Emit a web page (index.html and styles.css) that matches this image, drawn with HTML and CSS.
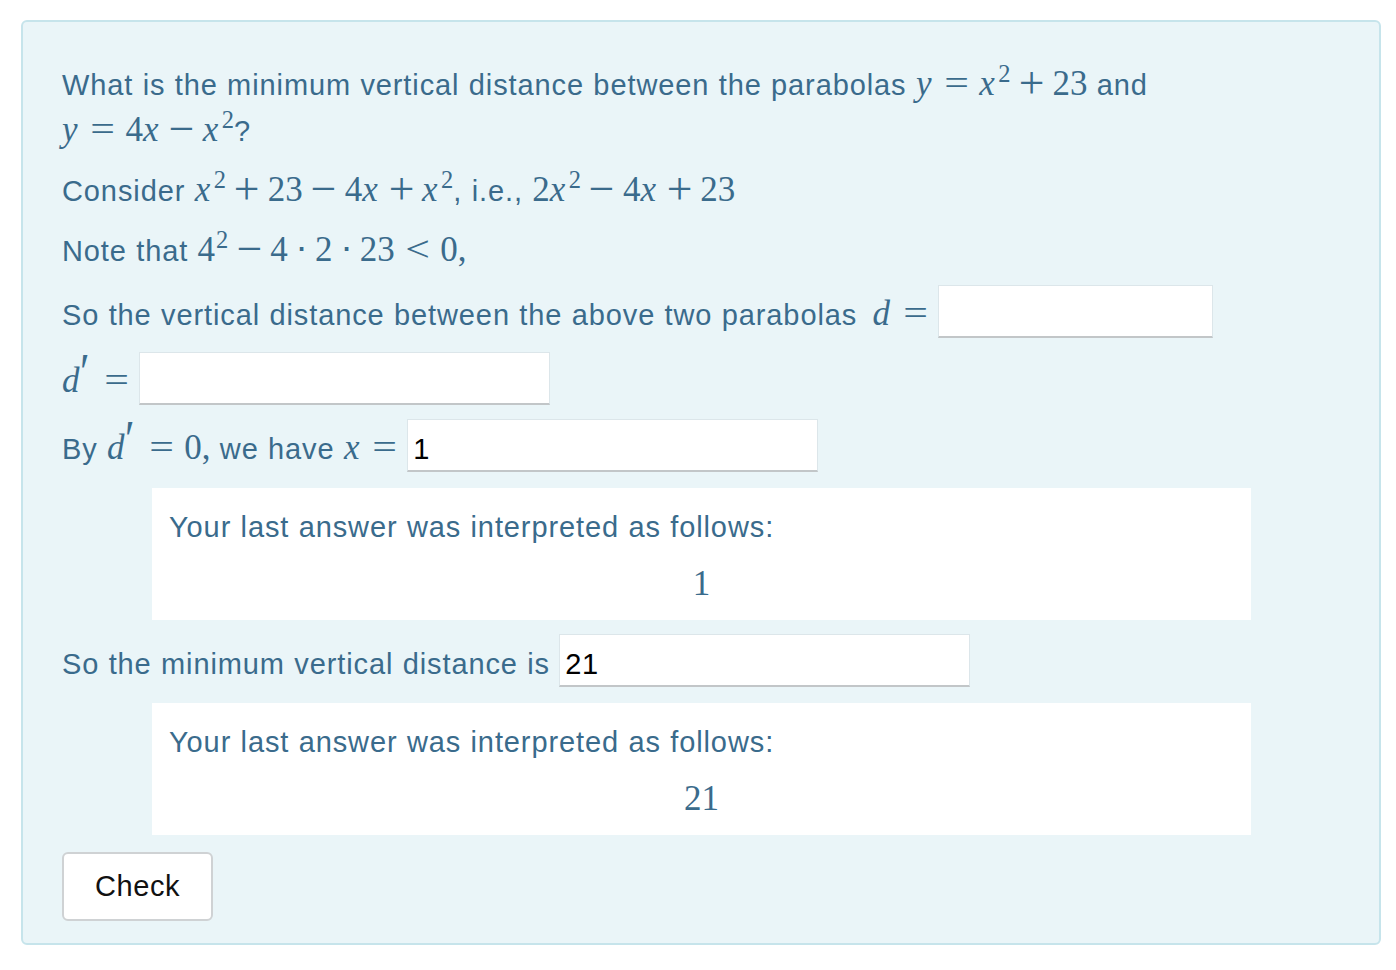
FILE: index.html
```html
<!DOCTYPE html>
<html>
<head>
<meta charset="utf-8">
<link rel="stylesheet" href="styles.css">
</head>
<body>
<div class="box">
  <p class="para">What is the minimum vertical distance between the parabolas <span class="m"><i>y</i><span class="rel">=</span><i>x</i><sup>2</sup><span class="bin">+</span>23</span> and <span class="m"><i>y</i><span class="rel">=</span>4<i>x</i><span class="bin">−</span><i>x</i><sup>2</sup></span>?</p>
  <p class="para">Consider <span class="m"><i>x</i><sup>2</sup><span class="bin">+</span>23<span class="bin">−</span>4<i>x</i><span class="bin">+</span><i>x</i><sup>2</sup></span>, i.e., <span class="m">2<i>x</i><sup>2</sup><span class="bin">−</span>4<i>x</i><span class="bin">+</span>23</span></p>
  <p class="para tight">Note that <span class="m">4<sup>2</sup><span class="bin">−</span>4<span class="dot">⋅</span>2<span class="dot">⋅</span>23<span class="rel">&lt;</span>0,</span></p>
  <p class="para">So the vertical distance between the above two parabolas <span class="m sp"><i>d</i><span class="rel">=</span></span><input class="ans short" type="text" value=""></p>
  <p class="para"><span class="m"><i>d</i><span class="prime">′</span><span class="rel wide">=</span></span><input class="ans" type="text" value=""></p>
  <p class="para">By <span class="m"><i>d</i><span class="prime">′</span><span class="rel wide">=</span>0,</span> we have <span class="m"><i>x</i><span class="rel">=</span></span><input class="ans" type="text" value="1"></p>
  <div class="feedback">
    <p class="fb-title">Your last answer was interpreted as follows:</p>
    <p class="fb-math"><span class="m">1</span></p>
  </div>
  <p class="para">So the minimum vertical distance is <input class="ans" type="text" value="21"></p>
  <div class="feedback">
    <p class="fb-title">Your last answer was interpreted as follows:</p>
    <p class="fb-math"><span class="m">21</span></p>
  </div>
  <button class="check" type="button">Check</button>
</div>
</body>
</html>
```
FILE: styles.css
```css
html, body {
  margin: 0;
  padding: 0;
  background: #ffffff;
}
body {
  padding: 20px 15px 26px 21px;
  font-family: "Liberation Sans", Arial, sans-serif;
  font-size: 29px;
  letter-spacing: 0.9px;
  word-spacing: 0.4px;
  color: #3a6b8c;
}
.box {
  width: 1360px;
  box-sizing: border-box;
  background: #eaf5f8;
  border: 2px solid #c6e4eb;
  border-radius: 6px;
  padding: 40px 39px 22px 39px;
}
.para {
  margin: 0 0 14px 0;
  line-height: 46px;
}
.para.tight {
  margin-bottom: 11px;
}
.m {
  font-family: "Liberation Serif", "Times New Roman", serif;
  font-size: 35px;
  letter-spacing: 0;
  word-spacing: 0;
  line-height: 0;
  white-space: nowrap;
}
.m i {
  font-style: italic;
  letter-spacing: 0.07em;
}
.m sup {
  font-size: 0.7em;
  vertical-align: 0.55em;
  line-height: 0;
  margin-left: 1px;
}
.rel, .bin {
  display: inline-block;
  width: 0.778em;
  text-align: center;
  line-height: 1;
}
.rel {
  margin: 0 0.26em;
  transform: scaleX(1.25);
}
.rel.wide {
  margin-left: 0.42em;
}
.bin {
  margin: 0 0.21em;
  transform: scale(1.3);
}
.dot {
  display: inline-block;
  width: 0.3em;
  text-align: center;
  margin: 0 0.24em;
  line-height: 1;
}
.prime {
  display: inline-block;
  font-size: 1em;
  line-height: 1;
  margin-left: -0.04em;
  transform: translateY(-0.22em) scale(1.25, 1.5);
}
.sp {
  margin-left: 6px;
}
.ans {
  box-sizing: border-box;
  width: 411px;
  height: 53px;
  margin: 0;
  padding: 8px 5px 0 5px;
  border: 1px solid #dce6ea;
  border-bottom: 2px solid #c2c6c8;
  background: #ffffff;
  font-family: "Liberation Sans", Arial, sans-serif;
  font-size: 29px;
  letter-spacing: 0.5px;
  color: #000000;
  vertical-align: baseline;
  outline: none;
}
.ans.short {
  width: 275px;
}
.feedback {
  margin: 16px 89px 14px 90px;
  background: #ffffff;
  padding: 16px 17px 12px 17px;
}
.fb-title {
  margin: 0 0 12px 0;
  line-height: 46px;
}
.fb-math {
  margin: 0;
  line-height: 46px;
  text-align: center;
}
.check {
  display: block;
  margin-top: 17px;
  width: 151px;
  height: 69px;
  background: #ffffff;
  border: 2px solid #cfd2d4;
  border-radius: 6px;
  font-family: "Liberation Sans", Arial, sans-serif;
  font-size: 29px;
  letter-spacing: 0.6px;
  color: #111111;
  padding: 0;
}
```
